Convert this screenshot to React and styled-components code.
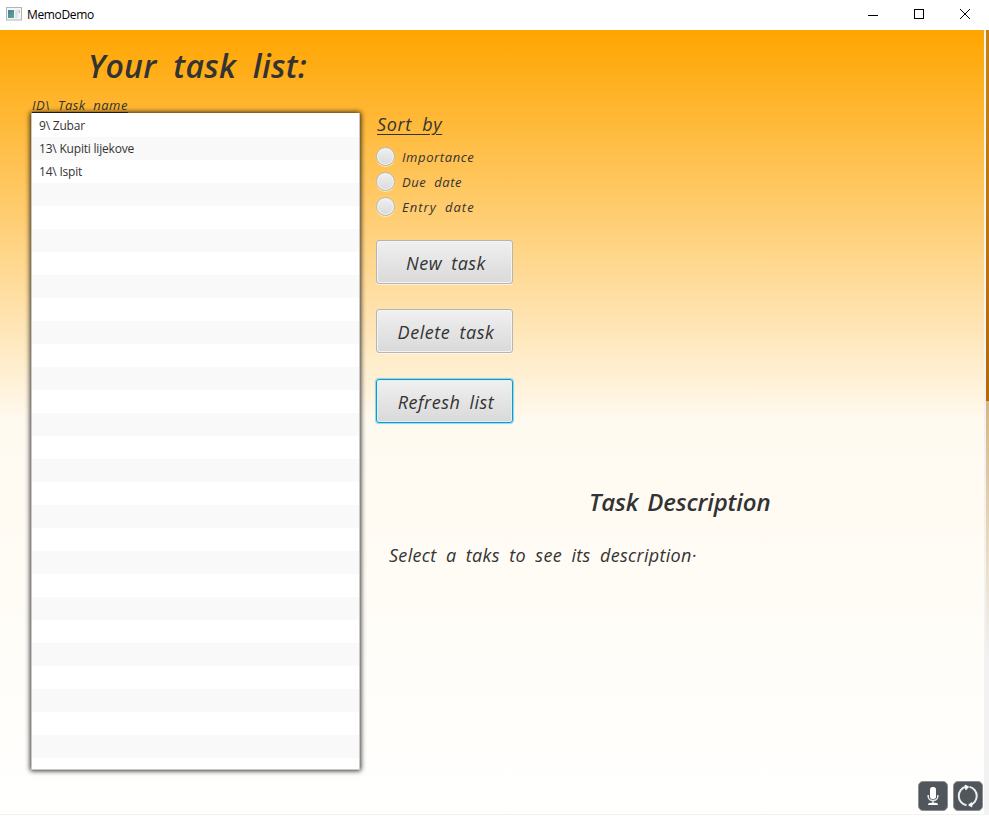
import React from "react";
import styled, { createGlobalStyle } from "styled-components";

const Global = createGlobalStyle`
  * { box-sizing: border-box; }
  body { margin: 0; background: #fff; overflow: hidden; }
`;

const Window = styled.div`
  width: 989px;
  height: 817px;
  display: flex;
  flex-direction: column;
  background: #fff;
  color: #333;
`;

const TitleBar = styled.header`
  height: 30px;
  flex: none;
  display: flex;
  align-items: center;
  padding-left: 6px;
  font: 12px/30px "Open Sans", "Noto Sans", sans-serif;
  color: #000;
`;

const AppIcon = styled.svg`
  display: block;
  width: 16px;
  height: 14px;
  margin: -2px 5px 0 0;
`;

const AppName = styled.span`
  flex: 1;
  letter-spacing: -0.35px;
`;

const WindowButton = styled.button`
  width: 46px;
  height: 30px;
  padding: 0 0 2px;
  border: 0;
  background: none;
  display: flex;
  align-items: center;
  justify-content: center;
`;

const Controls = styled.div`
  display: flex;
  margin-right: 1px;
`;

const Body = styled.div`
  height: 785px;
  flex: none;
  display: flex;
  background: #f2f2f2;
`;

const Scene = styled.main`
  width: 984px;
  height: 784px;
  display: flex;
  padding-left: 30px;
  background: linear-gradient(#ffa500 0%, #fffaf0 50%, #fffffe 100%);
`;

const Edge = styled.aside`
  width: 3px;
  margin-left: 2px;
  background: linear-gradient(#c8820f 0, #b56805 371px, #d8b483 371px, #eadbc0 520px, #f2f2f2 630px);
`;

const Hand = styled.span`
  display: block;
  white-space: pre;
  font-family: "Open Sans", "Noto Sans", sans-serif;
  font-style: italic;
  font-weight: ${(p) => p.$weight || 400};
  font-size: ${(p) => p.$size}px;
  line-height: ${(p) => p.$line}px;
  letter-spacing: ${(p) => p.$track || 0}px;
  word-spacing: ${(p) => p.$gap || 0}px;
`;

const ListColumn = styled.section`
  width: 331px;
  flex: none;
  display: flex;
  flex-direction: column;
`;

const Heading = styled(Hand).attrs({ as: "h1" })`
  margin: 12px 0 0 58px;
`;

const ListCaption = styled(Hand)`
  margin: 7px 0 0 2px;
  text-decoration: underline;
  text-decoration-thickness: 1px;
  text-underline-offset: 2px;
`;

const TaskList = styled.ul`
  margin: 0 0 0 1px;
  padding: 1px;
  width: 329px;
  height: 657px;
  list-style: none;
  border-radius: 1px;
  background: repeating-linear-gradient(#fff 0 23px, #f9f9f9 23px 46px) 0 1px;
  border: 1px solid #c8c8c8;
  border-width: 0 1px 1px 1px;
  box-shadow: 0 0 5px 1px rgba(0, 0, 0, 0.8);
`;

const TaskItem = styled.li`
  height: 23px;
  padding-left: 6px;
  font: 12px/24px "Open Sans", "Noto Sans", sans-serif;
  letter-spacing: -0.2px;
`;

const DetailColumn = styled.section`
  flex: 1;
  display: flex;
  flex-direction: column;
  padding: 82px 0 0 15px;
`;

const SortTitle = styled(Hand).attrs({ as: "h2" })`
  align-self: flex-start;
  margin: 0 0 8px 1px;
  text-decoration: underline;
  text-decoration-thickness: 1px;
  text-underline-offset: 3px;
`;

const RadioRow = styled.label`
  height: 25px;
  display: flex;
  align-items: center;
  gap: 7px;
`;

const RadioDot = styled.span`
  width: 19px;
  height: 19px;
  border-radius: 50%;
  border: 1px solid #bababa;
  background: linear-gradient(#f0f0f0, #dadada);
  box-shadow: inset 0 0 0 1px #f4f4f4, 0 1px 0 rgba(255, 255, 255, 0.6);
`;

const ButtonStack = styled.div`
  display: flex;
  flex-direction: column;
  gap: 25.4px;
  margin-top: 21px;
`;

const TaskButton = styled.button`
  width: 137px;
  height: 44px;
  padding: 2px 0 0 3px;
  display: flex;
  align-items: center;
  justify-content: center;
  color: #333;
  border-radius: 3px;
  border: 1px solid ${(p) => (p.$focused ? "#039ed3" : "#b5b5b5")};
  background: linear-gradient(#f0f0f0, #d9d9d9);
  box-shadow: inset 0 0 0 1px ${(p) => (p.$focused ? "#dff0f5" : "#f3f3f3")},
    0 ${(p) => (p.$focused ? "0 1px 1px rgba(3,158,211,.4)" : "1px 0 rgba(255,255,255,.6)")};
`;

const DescriptionTitle = styled(Hand).attrs({ as: "h2" })`
  margin: 61px 0 0 213px;
`;

const Description = styled(Hand).attrs({ as: "p" })`
  margin: 22px 0 0 13px;
`;

const Tools = styled.nav`
  display: flex;
  align-self: flex-end;
  gap: 5px;
  margin: auto 1px 3px 0;
`;

const ToolButton = styled.button`
  width: 30px;
  height: 30px;
  padding: 0;
  border: 1px solid #8b8f92;
  border-radius: 5px;
  background: #50565b;
  display: flex;
  align-items: center;
  justify-content: center;
`;

const Glyph = styled.svg`
  display: block;
  flex: none;
`;

const tasks = ["9\\ Zubar", "13\\ Kupiti lijekove", "14\\ Ispit"];
const sortOptions = [
  { label: "Importance", track: 0.6 },
  { label: "Due date", track: 0.55 },
  { label: "Entry date", track: 1 },
];
const actions = [
  { label: "New task", track: 0.5 },
  { label: "Delete task", track: 0.55 },
  { label: "Refresh list", track: 0.5, focused: true },
];

export default function App() {
  return (
    <Window>
      <Global />
      <TitleBar>
        <AppIcon viewBox="0 0 16 14">
          <defs>
            <linearGradient id="pane" x1="0" y1="0" x2="1" y2="1">
              <stop offset="0" stopColor="#4b79a5" />
              <stop offset="1" stopColor="#55b08b" />
            </linearGradient>
          </defs>
          <rect x=".5" y=".5" width="15" height="12.5" fill="#f6f6f6" stroke="#b1b5b8" />
          <rect x="2" y="3" width="6" height="8" fill="url(#pane)" />
          <rect x="9" y="3" width="3" height="8" fill="#e2e4e8" />
          <rect x="12.5" y="3" width="1.5" height="3" fill="#b3cdbf" />
        </AppIcon>
        <AppName>MemoDemo</AppName>
        <Controls>
          <WindowButton aria-label="Minimize">
            <Glyph width="12" height="11" stroke="#000"><path d="M1 6.500H11" /></Glyph>
          </WindowButton>
          <WindowButton aria-label="Maximize">
            <Glyph width="10" height="10" fill="none" stroke="#000"><rect x=".5" y=".5" width="9" height="9" /></Glyph>
          </WindowButton>
          <WindowButton aria-label="Close">
            <Glyph width="10" height="10" stroke="#000"><path d="M0 0L10 10M10 0L0 10" /></Glyph>
          </WindowButton>
        </Controls>
      </TitleBar>
      <Body>
        <Scene>
          <ListColumn>
            <Heading $size={32} $line={48} $weight={600} $track={0.3} $gap={8}>Your task list:</Heading>
            <ListCaption $size={13} $line={16} $weight={500} $track={0.45} $gap={4}>{"ID\\ Task name"}</ListCaption>
            <TaskList>
              {tasks.map((task) => <TaskItem key={task}>{task}</TaskItem>)}
            </TaskList>
          </ListColumn>
          <DetailColumn>
            <SortTitle $size={18} $line={24} $weight={500} $track={0.65} $gap={5}>Sort by</SortTitle>
            {sortOptions.map((o) => (
              <RadioRow key={o.label}>
                <RadioDot />
                <Hand $size={13} $line={20} $weight={500} $track={o.track} $gap={4}>{o.label}</Hand>
              </RadioRow>
            ))}
            <ButtonStack>
              {actions.map((a) => (
                <TaskButton key={a.label} $focused={a.focused}>
                  <Hand $size={18} $line={24} $weight={500} $track={a.track} $gap={4}>{a.label}</Hand>
                </TaskButton>
              ))}
            </ButtonStack>
            <DescriptionTitle $size={24} $line={36} $weight={600} $track={-0.15} $gap={3}>Task Description</DescriptionTitle>
            <Description $size={18} $line={26} $weight={500} $track={0.3} $gap={4.5}>Select a taks to see its description·</Description>
            <Tools>
              <ToolButton aria-label="Microphone">
                <Glyph width="28" height="28" viewBox="0 0 28 28">
                  <rect x="11" y="5" width="6" height="12" rx="2.5" fill="#fff" />
                  <path d="M9.200 13v1.500a4.800 4 0 0 0 9.600 0V13M14 18.500V21" fill="none" stroke="#e6e8e9" strokeWidth="1.5" />
                  <path d="M9 23q0-2.200 3-2.200h4q3 0 3 2.200Z" fill="#fff" />
                </Glyph>
              </ToolButton>
              <ToolButton aria-label="Synchronize">
                <Glyph width="28" height="28" viewBox="0 0 28 28" fill="none" stroke="#eceeee" strokeWidth="2">
                  <path d="M12 4.800A9.400 9.400 0 0 0 12.500 23.200M15.500 23.200A9.400 9.400 0 0 0 15.500 4.900" />
                  <path d="M11 3l3.800 1.800-3 3.200ZM17.500 20.500l-3 2.500 3.500 2Z" fill="#fff" stroke="#fff" strokeWidth=".7" />
                </Glyph>
              </ToolButton>
            </Tools>
          </DetailColumn>
        </Scene>
        <Edge />
      </Body>
    </Window>
  );
}
